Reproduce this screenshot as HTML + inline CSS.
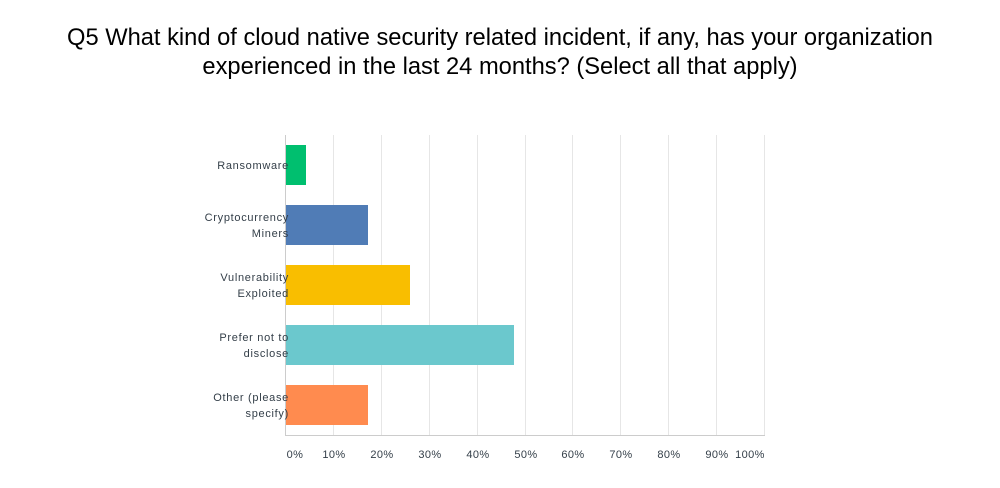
<!DOCTYPE html><html><head><style>
body{margin:0;width:1000px;height:488px;background:#fff;position:relative;overflow:hidden;font-family:"Liberation Sans",Arial,sans-serif}
.t{position:absolute;left:0;width:1000px;top:24px;text-align:center;font-size:23.7px;line-height:29px;color:#000}
.g{position:absolute;top:135px;height:300px;width:1px;background:#e6e6e6}
.b{position:absolute;left:286px;height:40px}
.l{position:absolute;right:711px;font-size:11px;line-height:16px;color:#333e48;text-align:right;letter-spacing:.7px}
.x{position:absolute;top:449px;font-size:11px;color:#333e48;width:40px;text-align:center;letter-spacing:.4px}
</style></head><body>
<div class="t">Q5 What kind of cloud native security related incident, if any, has your organization<br>experienced in the last 24 months? (Select all that apply)</div>
<div class="g" style="left:333px"></div><div class="g" style="left:381px"></div><div class="g" style="left:429px"></div><div class="g" style="left:477px"></div><div class="g" style="left:525px"></div><div class="g" style="left:572px"></div><div class="g" style="left:620px"></div><div class="g" style="left:668px"></div><div class="g" style="left:716px"></div><div class="g" style="left:764px"></div>
<div style="position:absolute;left:285px;top:135px;width:1px;height:301px;background:#ccc"></div>
<div style="position:absolute;left:285px;top:435px;width:480px;height:1px;background:#ccc"></div>
<div class="b" style="top:145px;width:20px;background:#00bf6f"></div>
<div class="b" style="top:205px;width:82px;background:#507cb6"></div>
<div class="b" style="top:265px;width:124px;background:#f9be00"></div>
<div class="b" style="top:325px;width:228px;background:#6bc8cd"></div>
<div class="b" style="top:385px;width:82px;background:#ff8b4f"></div>
<div class="l" style="top:158px">Ransomware</div>
<div class="l" style="top:210px">Cryptocurrency<br>Miners</div>
<div class="l" style="top:270px">Vulnerability<br>Exploited</div>
<div class="l" style="top:330px">Prefer not to<br>disclose</div>
<div class="l" style="top:390px">Other (please<br>specify)</div>
<div class="x" style="left:275px">0%</div><div class="x" style="left:314px">10%</div><div class="x" style="left:362px">20%</div><div class="x" style="left:410px">30%</div><div class="x" style="left:458px">40%</div><div class="x" style="left:506px">50%</div><div class="x" style="left:553px">60%</div><div class="x" style="left:601px">70%</div><div class="x" style="left:649px">80%</div><div class="x" style="left:697px">90%</div><div class="x" style="left:730px">100%</div>
</body></html>
